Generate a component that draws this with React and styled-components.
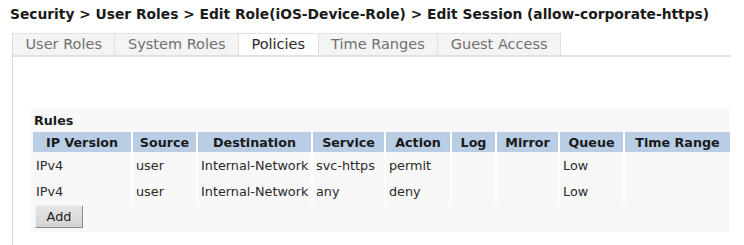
import React from "react";
import styled, { createGlobalStyle } from "styled-components";

const GlobalStyle = createGlobalStyle`
  body {
    margin: 0;
    background: #ffffff;
    font-family: "DejaVu Sans", Verdana, sans-serif;
    color: #222;
  }
`;

const Page = styled.div`
  width: 744px;
  height: 245px;
  overflow: hidden;
`;

const Title = styled.h1`
  margin: 0;
  padding: 6px 0 0 10px;
  height: 26px;
  box-sizing: border-box;
  font-size: 13.8px;
  font-weight: bold;
  color: #1a1a1a;
  white-space: nowrap;
`;

const Frame = styled.div`
  margin: 7px 0 0 12px;
  width: 718px;
  height: 220px;
  border-left: 1px solid #dcdcdc;
`;

const TabBar = styled.div`
  display: flex;
  height: 24px;
  box-sizing: border-box;
  border-bottom: 2px solid #e0e0e0;
`;

const Tab = styled.div`
  padding: 0 12.5px;
  font-size: 14.5px;
  line-height: 21px;
  white-space: nowrap;
  color: ${(p) => (p.$active ? "#2a2a2a" : "#707070")};
  background: ${(p) => (p.$active ? "#ffffff" : "#f4f4f4")};
  border-top: 1px solid #e2e2e2;
  border-right: 1px solid #e0e0e0;
`;

const Panel = styled.div`
  margin: 51px 0 0 18px;
  width: 699px;
  height: 124px;
  box-sizing: border-box;
  background: #f8f8f8;
  padding: 6px 0 0 2px;
`;

const Caption = styled.div`
  font-size: 12.7px;
  font-weight: bold;
  color: #1a1a1a;
  height: 18px;
  line-height: 14px;
  padding-left: 1px;
`;

const Table = styled.table`
  border-collapse: collapse;
  font-size: 12.8px;
  table-layout: fixed;
  width: 697px;
`;

const Th = styled.th`
  background: #b9cde5;
  font-weight: bold;
  font-size: 12.7px;
  color: #1a1a1a;
  height: 20px;
  padding: 0 2px;
  text-align: center;
  border-right: 2px solid #ffffff;
  white-space: nowrap;
  &:last-child {
    border-right: none;
  }
`;

const Td = styled.td`
  height: 26px;
  padding: 0 3px;
  color: #2a2a2a;
  border-right: 2px solid #ffffff;
  white-space: nowrap;
  &:last-child {
    border-right: none;
  }
`;

const AddButton = styled.button`
  margin: 1px 0 0 2px;
  width: 48px;
  height: 23px;
  font-family: "DejaVu Sans", Verdana, sans-serif;
  font-size: 12.8px;
  color: #222;
  background: linear-gradient(#e6e6e6, #d2d2d2);
  border: 1px solid;
  border-color: #f0f0f0 #8a8a8a #8a8a8a #f0f0f0;
  padding: 0;
`;

const tabs = ["User Roles", "System Roles", "Policies", "Time Ranges", "Guest Access"];

const columns = [
  { label: "IP Version", width: 99 },
  { label: "Source", width: 65 },
  { label: "Destination", width: 115 },
  { label: "Service", width: 73 },
  { label: "Action", width: 66 },
  { label: "Log", width: 45 },
  { label: "Mirror", width: 63 },
  { label: "Queue", width: 65 },
  { label: "Time Range", width: 106 },
];

const rules = [
  ["IPv4", "user", "Internal-Network", "svc-https", "permit", "", "", "Low", ""],
  ["IPv4", "user", "Internal-Network", "any", "deny", "", "", "Low", ""],
];

export default function App() {
  return (
    <Page>
      <GlobalStyle />
      <Title>
        Security &gt; User Roles &gt; Edit Role(iOS-Device-Role) &gt; Edit Session (allow-corporate-https)
      </Title>
      <Frame>
        <TabBar>
          {tabs.map((t) => (
            <Tab key={t} $active={t === "Policies"}>
              {t}
            </Tab>
          ))}
        </TabBar>
        <Panel>
          <Caption>Rules</Caption>
          <Table>
            <colgroup>
              {columns.map((c) => (
                <col key={c.label} style={{ width: c.width }} />
              ))}
            </colgroup>
            <thead>
              <tr>
                {columns.map((c) => (
                  <Th key={c.label}>{c.label}</Th>
                ))}
              </tr>
            </thead>
            <tbody>
              {rules.map((r, i) => (
                <tr key={i}>
                  {r.map((v, j) => (
                    <Td key={j}>{v}</Td>
                  ))}
                </tr>
              ))}
            </tbody>
          </Table>
          <AddButton>Add</AddButton>
        </Panel>
      </Frame>
    </Page>
  );
}
